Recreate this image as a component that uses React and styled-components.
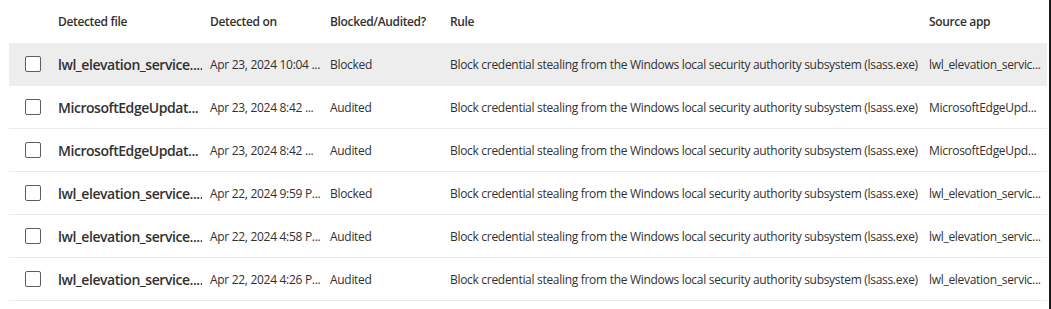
import React from 'react';
import styled, { createGlobalStyle } from 'styled-components';

const GlobalStyle = createGlobalStyle`
  html, body {
    margin: 0;
    padding: 0;
    background: #ffffff;
  }
  body {
    font-family: "Open Sans", "Liberation Sans", sans-serif;
    color: #323130;
  }
`;

const Frame = styled.div`
  display: flex;
  width: 1051px;
  height: 309px;
  overflow: hidden;
  background: #ffffff;
`;

const TableArea = styled.div`
  flex: 1;
  padding-left: 9px;
  padding-right: 2px;
`;

const EdgeBar = styled.div`
  width: 2px;
  background: #1b1a19;
`;

const Grid = styled.div`
  display: grid;
  grid-template-columns: 41px 152px 120px 120px 479px 1fr;
`;

const HeaderRow = styled.div`
  display: contents;
`;

const HeaderCell = styled.div`
  height: 43px;
  display: flex;
  align-items: center;
  padding-left: 8px;
  font-size: 12px;
  font-weight: 600;
  letter-spacing: -0.35px;
  color: #323130;
  white-space: nowrap;
  overflow: hidden;
`;

const Row = styled.div`
  display: contents;

  & > div {
    background: ${p => (p.$selected ? '#ededed' : '#ffffff')};
    border-bottom: 1px solid ${p => (p.$selected ? '#ededed' : '#edebe9')};
  }
`;

const Cell = styled.div`
  height: 42px;
  display: flex;
  align-items: center;
  padding-left: 8px;
  font-size: ${p => (p.$primary ? '14px' : '12px')};
  font-weight: ${p => (p.$primary ? 600 : 400)};
  letter-spacing: ${p => (p.$primary ? '-0.45px' : '-0.3px')};
  color: #323130;
  white-space: nowrap;
  overflow: hidden;
`;

const CheckCell = styled.div`
  height: 42px;
  display: flex;
  align-items: center;
  padding-left: 16px;
`;

const Checkbox = styled.span`
  display: block;
  width: 14px;
  height: 14px;
  border: 1px solid #605e5c;
  border-radius: 2px;
  background: #ffffff;
`;

const RULE = 'Block credential stealing from the Windows local security authority subsystem (lsass.exe)';

const rows = [
  { file: 'lwl_elevation_service....', date: 'Apr 23, 2024 10:04 ...', action: 'Blocked', app: 'lwl_elevation_servic...', selected: true },
  { file: 'MicrosoftEdgeUpdat...', date: 'Apr 23, 2024 8:42 ...', action: 'Audited', app: 'MicrosoftEdgeUpd...' },
  { file: 'MicrosoftEdgeUpdat...', date: 'Apr 23, 2024 8:42 ...', action: 'Audited', app: 'MicrosoftEdgeUpd...' },
  { file: 'lwl_elevation_service....', date: 'Apr 22, 2024 9:59 P...', action: 'Blocked', app: 'lwl_elevation_servic...' },
  { file: 'lwl_elevation_service....', date: 'Apr 22, 2024 4:58 P...', action: 'Audited', app: 'lwl_elevation_servic...' },
  { file: 'lwl_elevation_service....', date: 'Apr 22, 2024 4:26 P...', action: 'Audited', app: 'lwl_elevation_servic...' },
];

export default function App() {
  return (
    <>
      <GlobalStyle />
      <Frame>
        <TableArea>
          <Grid>
            <HeaderRow>
              <HeaderCell />
              <HeaderCell>Detected file</HeaderCell>
              <HeaderCell>Detected on</HeaderCell>
              <HeaderCell>Blocked/Audited?</HeaderCell>
              <HeaderCell>Rule</HeaderCell>
              <HeaderCell>Source app</HeaderCell>
            </HeaderRow>
            {rows.map((r, i) => (
              <Row key={i} $selected={r.selected}>
                <CheckCell><Checkbox /></CheckCell>
                <Cell $primary>{r.file}</Cell>
                <Cell>{r.date}</Cell>
                <Cell>{r.action}</Cell>
                <Cell>{RULE}</Cell>
                <Cell>{r.app}</Cell>
              </Row>
            ))}
          </Grid>
        </TableArea>
        <EdgeBar />
      </Frame>
    </>
  );
}
